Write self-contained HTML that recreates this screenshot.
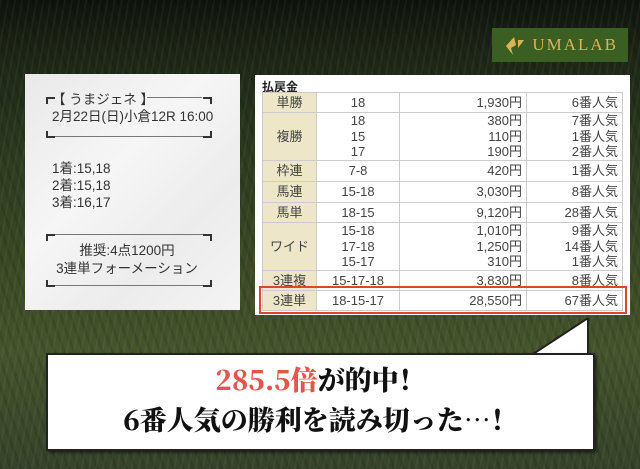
<!DOCTYPE html>
<html><head><meta charset="utf-8"><style>
body{margin:0;width:640px;height:469px;overflow:hidden;position:relative;font-family:"Liberation Sans","Noto Sans CJK JP",sans-serif;
background:linear-gradient(180deg,#0f130d 0%,#1d2616 12%,#2e3c20 35%,#3a4824 55%,#45542c 75%,#36432a 100%);}
.grass{position:absolute;inset:0;background:repeating-linear-gradient(100deg,rgba(255,255,255,0.04) 0 2px,transparent 2px 7px),repeating-linear-gradient(70deg,rgba(0,0,0,0.1) 0 3px,transparent 3px 9px);}
.logo{position:absolute;left:492px;top:28px;width:136px;height:34px;background:#3b5e22;color:#d8b45a;font-family:"Liberation Serif",serif;font-size:17px;letter-spacing:2px;line-height:34px;text-align:right;padding-right:10px;box-sizing:border-box}
.logo svg{position:absolute;left:12px;top:8px}
.left{position:absolute;left:25px;top:74px;width:215px;height:236px;background:linear-gradient(135deg,#e9e9e9,#f6f6f6 40%,#ececec 70%,#f4f4f4);color:#333;font-size:13.5px}
.br{position:absolute;border-color:#333;border-style:solid;width:7px;height:5px}
.line{position:absolute;height:1px;background:#777}
.tab{position:absolute;left:255px;top:75px;width:375px;height:240px;background:#fff}
table{position:absolute;left:7px;top:17px;border-collapse:collapse;font-size:13px;color:#444}
td{border:1px solid #ccc;padding:0 4px;line-height:15.5px;height:19px}
td.h{background:#ede6c8;text-align:center;width:45px}
td.c2{width:74px;text-align:center}
td.c3{width:118px;text-align:right}
td.c4{width:87px;text-align:right}
.callout{position:absolute;left:46px;top:353px;width:545px;height:94px;background:#fff;border:2px solid #222;box-shadow:2px 2px 3px rgba(0,0,0,.5);font-family:"Noto Serif CJK SC","Liberation Serif",serif;font-weight:900;text-align:center;color:#111}
</style></head><body>
<div class="grass"></div>
<div class="logo"><svg width="22" height="20" viewBox="0 0 22 20"><path d="M10 1 L2 10 L9 19 L7 12 L12 9Z M14 4 L20 4 L14 12Z" fill="#d8b45a"/></svg>UMALAB</div>
<div class="left">
 <div class="br" style="left:21px;top:23px;border-width:2px 0 0 2px"></div>
 <div class="line" style="left:122px;top:23px;width:55px"></div>
 <div class="br" style="left:178px;top:23px;border-width:2px 2px 0 0"></div>
 <div style="position:absolute;left:27px;top:17px;line-height:17px">【 うまジェネ 】<br>2月22日(日)小倉12R 16:00</div>
 <div class="line" style="left:23px;top:62px;width:156px"></div>
 <div class="br" style="left:21px;top:57px;border-width:0 0 2px 2px"></div>
 <div class="br" style="left:178px;top:57px;border-width:0 2px 2px 0"></div>
 <div style="position:absolute;left:27px;top:86px;line-height:17px">1着:15,18<br>2着:15,18<br>3着:16,17</div>
 <div class="line" style="left:23px;top:160px;width:156px"></div>
 <div class="br" style="left:21px;top:160px;border-width:2px 0 0 2px"></div>
 <div class="br" style="left:178px;top:160px;border-width:2px 2px 0 0"></div>
 <div style="position:absolute;left:23px;width:158px;text-align:center;top:168px;line-height:18px">推奨:4点1200円<br>3連単フォーメーション</div>
 <div class="line" style="left:23px;top:211px;width:156px"></div>
 <div class="br" style="left:21px;top:206px;border-width:0 0 2px 2px"></div>
 <div class="br" style="left:178px;top:206px;border-width:0 2px 2px 0"></div>
</div>
<div class="tab">
 <div style="position:absolute;left:7px;top:3px;font-size:12px;font-weight:bold;color:#222">払戻金</div>
 <table>
 <tr style="height:20px"><td class="h">単勝</td><td class="c2">18</td><td class="c3">1,930円</td><td class="c4">6番人気</td></tr>
 <tr style="height:48px"><td class="h">複勝</td><td class="c2">18<br>15<br>17</td><td class="c3">380円<br>110円<br>190円</td><td class="c4">7番人気<br>1番人気<br>2番人気</td></tr>
 <tr style="height:21px"><td class="h">枠連</td><td class="c2">7-8</td><td class="c3">420円</td><td class="c4">1番人気</td></tr>
 <tr style="height:21px"><td class="h">馬連</td><td class="c2">15-18</td><td class="c3">3,030円</td><td class="c4">8番人気</td></tr>
 <tr style="height:20px"><td class="h">馬単</td><td class="c2">18-15</td><td class="c3">9,120円</td><td class="c4">28番人気</td></tr>
 <tr style="height:48px"><td class="h">ワイド</td><td class="c2">15-18<br>17-18<br>15-17</td><td class="c3">1,010円<br>1,250円<br>310円</td><td class="c4">9番人気<br>14番人気<br>1番人気</td></tr>
 <tr style="height:20px"><td class="h">3連複</td><td class="c2">15-17-18</td><td class="c3">3,830円</td><td class="c4">8番人気</td></tr>
 <tr style="height:20px"><td class="h">3連単</td><td class="c2">18-15-17</td><td class="c3">28,550円</td><td class="c4">67番人気</td></tr>
 </table>
 <div style="position:absolute;left:4px;top:211px;width:364px;height:24px;border:2px solid #e0442c"></div>
</div>
<svg style="position:absolute;left:520px;top:318px" width="80" height="40"><polygon points="10,38 68,0 68,38" fill="#fff" stroke="#222" stroke-width="2"/><rect x="8" y="36" width="62" height="6" fill="#fff"/></svg>
<div class="callout">
 <div style="position:absolute;left:0;right:0;top:7px;font-size:27px;line-height:34px"><span style="color:#e0584c">285.5倍</span>が的中！</div>
 <div style="position:absolute;left:0;right:0;top:47px;font-size:27px;line-height:34px">6番人気の勝利を読み切った…！</div>
</div>
</body></html>
